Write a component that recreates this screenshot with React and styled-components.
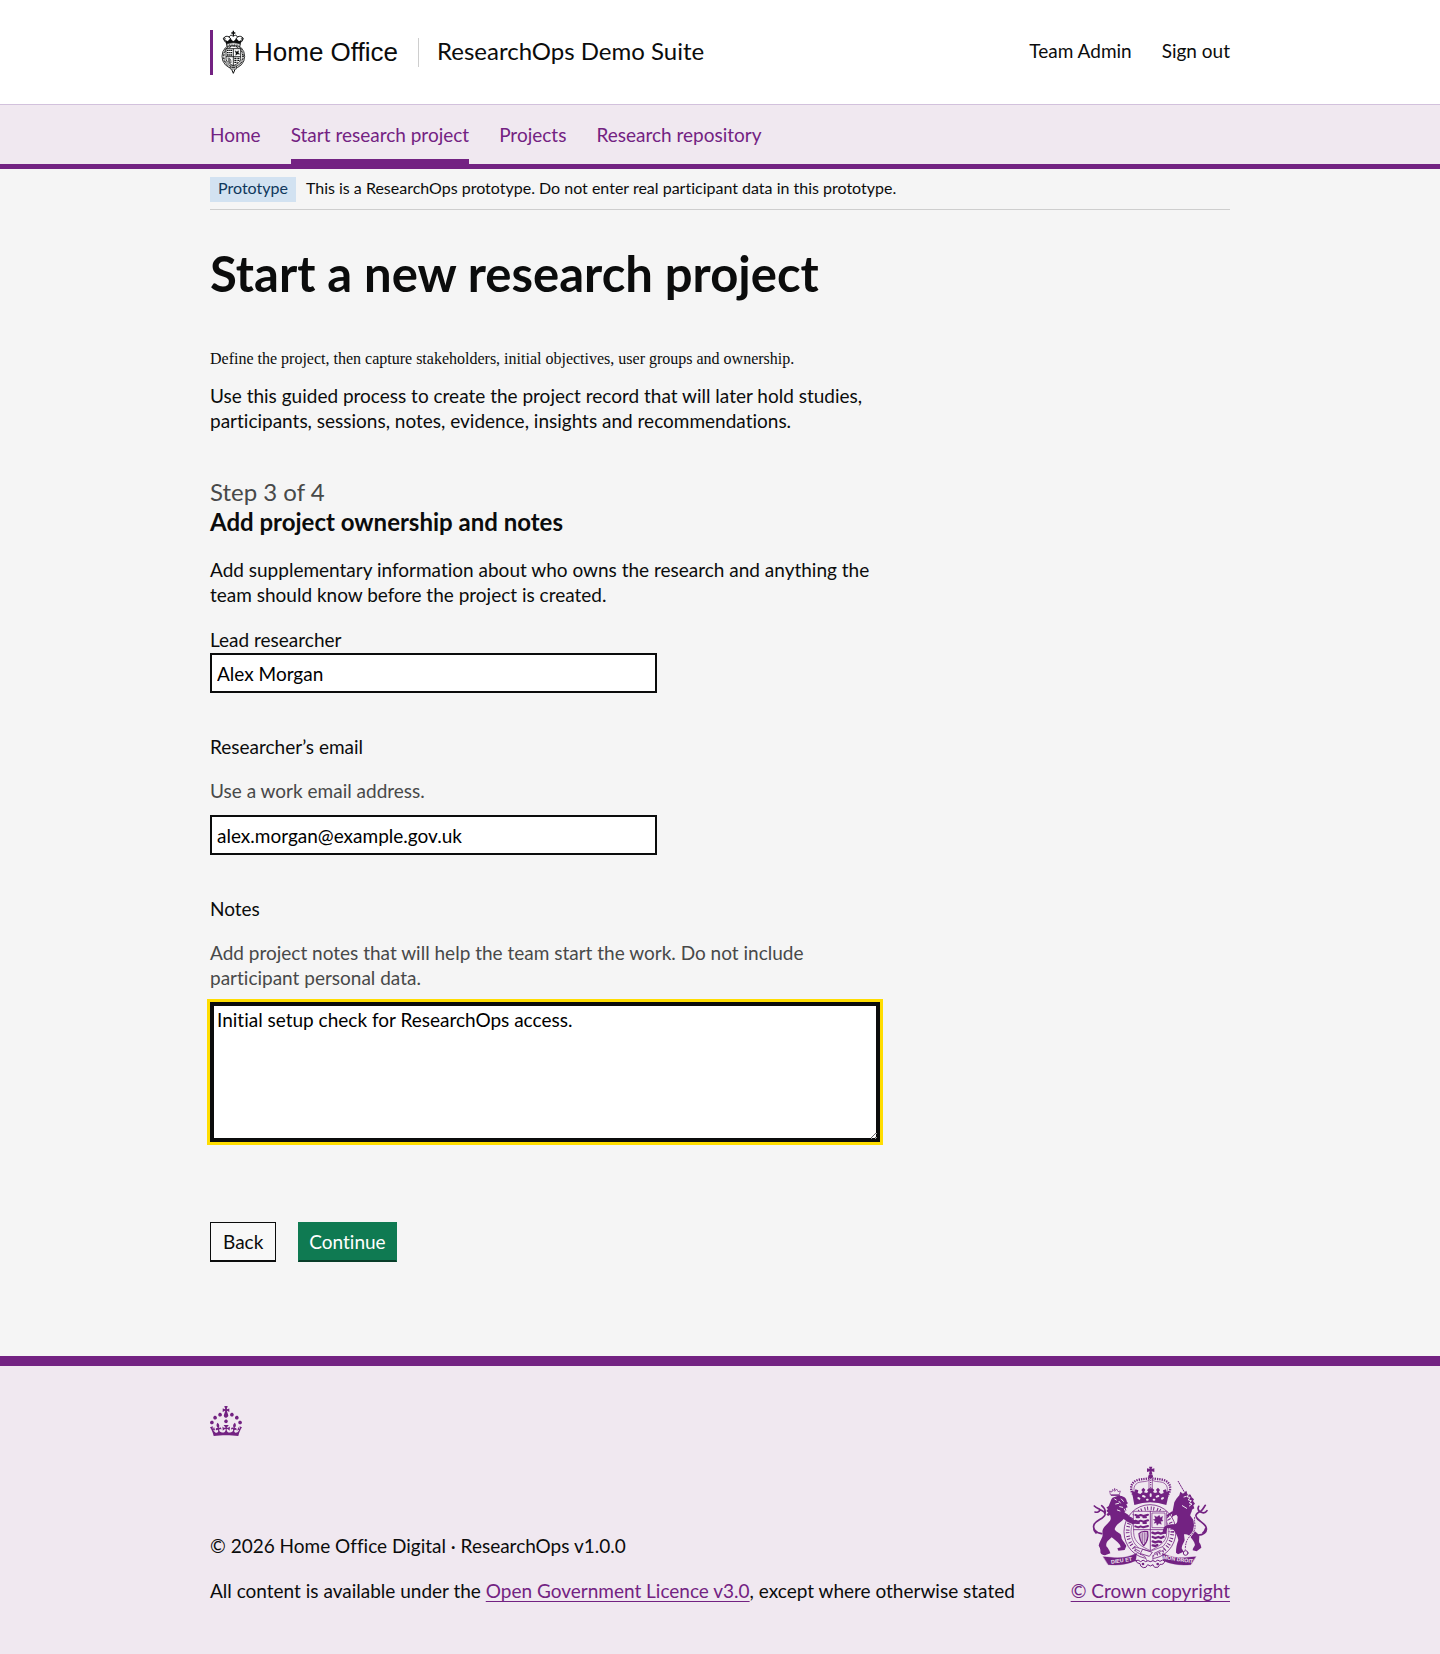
import React from 'react';
import styled, { createGlobalStyle, css } from 'styled-components';

const purple = '#732282';
const tint = '#f0e8f0';
const ink = '#0b0c0c';
const muted = '#484949';

const GlobalStyle = createGlobalStyle`
  *, *::before, *::after { box-sizing: border-box; }
  body {
    margin: 0;
    background: ${tint};
    color: ${ink};
    font: 19px/25px Lato, "Liberation Sans", sans-serif;
    font-variant-ligatures: none;
  }
  p, h1, h2 { margin: 0; }
`;

const Page = styled.div`
  background: #f5f5f5;
`;

const Container = styled.div`
  max-width: 1020px;
  margin: 0 auto;
  @media (max-width: 1080px) { margin: 0 30px; }
`;

const Header = styled.header`
  background: #fff;
  border-bottom: 1px solid #d2c1dc;
`;

const HeaderRow = styled(Container)`
  display: flex;
  align-items: center;
  flex-wrap: wrap;
  min-height: 104px;
`;

const Brand = styled.a`
  display: flex;
  align-items: center;
  gap: 8px;
  height: 45px;
  padding-left: 8px;
  border-left: 3px solid ${purple};
  color: ${ink};
  font: 26px/45px "Liberation Sans", Arial, sans-serif;
  text-decoration: none;
`;

const ServiceName = styled.a`
  margin-left: 20px;
  padding: 0 0 3px 18px;
  border-left: 1px solid #cecece;
  color: ${ink};
  font-size: 24px;
  line-height: 26px;
  text-decoration: none;
`;

const Account = styled.nav`
  display: flex;
  gap: 30px;
  margin-left: auto;
  padding-bottom: 3px;
`;

const AccountLink = styled.a`
  color: ${ink};
  text-decoration: none;
`;

const ServiceNav = styled.nav`
  background: ${tint};
  border-bottom: 5px solid ${purple};
`;

const NavList = styled(Container).attrs({ as: 'ul' })`
  display: flex;
  flex-wrap: wrap;
  gap: 0 30px;
  padding: 0;
  list-style: none;
`;

const NavLink = styled.a`
  display: block;
  padding: 17px 0 12px;
  border-bottom: 5px solid ${p => (p.$current ? purple : 'transparent')};
  color: ${purple};
  text-decoration: none;
`;

const PhaseBanner = styled.div`
  display: flex;
  align-items: flex-start;
  gap: 10px;
  padding: 8px 0 7px;
  border-bottom: 1px solid #cecece;
  font-size: 16px;
  line-height: 22px;
`;

const Tag = styled.strong`
  padding: 0 8px 3px;
  background: #d2e2f1;
  color: #0f385c;
  font-weight: 400;
`;

const Main = styled.main`
  padding: 34px 0 94px;
`;

const Column = styled.div`
  max-width: 670px;
`;

const Title = styled.h1`
  font-size: 49px;
  line-height: 58px;
  font-weight: 700;
`;

const Summary = styled.p`
  margin-top: 48px;
  font: 16px/18px "Liberation Serif", "Times New Roman", serif;
`;

const Body = styled.p`
  margin-top: ${p => p.$gap}px;
`;

const StepCaption = styled.span`
  display: block;
  margin-top: 44px;
  color: ${muted};
  font-size: 24px;
  line-height: 30px;
`;

const StepTitle = styled.h2`
  font-size: 24px;
  line-height: 30px;
  font-weight: 700;
`;

const Form = styled.form`
  display: flex;
  flex-direction: column;
  gap: 40px;
  margin-top: 19px;
`;

const Field = styled.div`
  display: flex;
  flex-direction: column;
`;

const Label = styled.label`
  padding: 1px 0;
`;

const Hint = styled.div`
  max-width: 620px;
  margin: 18px 0 12px;
  color: ${muted};
`;

const control = css`
  width: 100%;
  border: 2px solid ${ink};
  border-radius: 0;
  background: #fff;
  color: #000;
  font: inherit;
`;

const TextInput = styled.input`
  ${control}
  max-width: 447px;
  height: 40px;
  padding: 5px;
`;

const TextArea = styled.textarea`
  ${control}
  display: block;
  height: 140px;
  padding: 3px 5px;
  resize: vertical;
  box-shadow: inset 0 0 0 2px ${ink};
  outline: 3px solid #ffdd00;
`;

const Actions = styled.div`
  display: flex;
  gap: 22px;
  margin-top: 40px;
`;

const Button = styled.button`
  height: 40px;
  padding: 0 ${p => (p.$primary ? 10 : 12)}px;
  border: 1px solid ${p => (p.$primary ? '#0f7a52' : ink)};
  border-bottom: 2px solid ${p => (p.$primary ? '#083d29' : ink)};
  border-radius: 0;
  background: ${p => (p.$primary ? '#0f7a52' : '#f8f8f8')};
  color: ${p => (p.$primary ? '#fff' : ink)};
  font: inherit;
`;

const Footer = styled.footer`
  padding: 40px 0 50px;
  border-top: 10px solid ${purple};
  background: ${tint};
  color: ${ink};
`;

const FooterRow = styled.div`
  display: flex;
  flex-wrap: wrap;
  align-items: flex-end;
  justify-content: space-between;
  gap: 30px;
  margin-top: 30px;
`;

const FooterMeta = styled.div`
  display: flex;
  flex-direction: column;
  gap: 20px;
`;

const FooterLink = styled.a`
  color: ${purple};
  text-decoration: underline;
  text-decoration-thickness: 1px;
  text-underline-offset: 3px;
`;

const Copyright = styled(FooterLink)`
  display: flex;
  flex-direction: column;
  align-items: center;
  gap: 9px;
`;

const Block = styled.svg`
  display: block;
  flex: none;
`;

const ArmsText = styled.text`
  font: 700 16px "Liberation Sans", sans-serif;
`;

function Crest() {
  return (
    <Block width="25" height="44" viewBox="62 43 75 132" fill="none" stroke="#0b0c0c" strokeWidth="2" aria-hidden="true">
      <path d="M97 45h4v5h4v4h-4v8h-4v-8h-4v-4h4z" fill="#0b0c0c" stroke="none" />
      <path d="M98 62c-4-5-10-4-11 3M100 62c4-5 10-4 11 3M76 80c-10-10-5-19 5-18 8 1 11 7 11 15M122 80c10-10 5-19-5-18-8 1-11 7-11 15" strokeWidth="3" />
      <circle cx="72" cy="69" r="3" /><circle cx="126" cy="69" r="3" />
      <path d="M74 72l8 5 7-8 10 8 10-8 7 8 8-5-4 17H78z" fill="#0b0c0c" stroke="none" />
      <ellipse cx="99" cy="122" rx="34" ry="36" fill="#fff" strokeWidth="2.5" />
      <ellipse cx="99" cy="122" rx="29" ry="31" strokeWidth="5" strokeDasharray="2.5 2" />
      <path d="M79 84q20-5 40 0v8q-20-5-40 0z" fill="#fff" />
      <path d="M81 88h36" strokeDasharray="3 2" strokeWidth="3" />
      <path d="M77 99h44v29c0 13-12 17-22 22-10-5-22-9-22-22z" fill="#fff" strokeWidth="2.5" />
      <path d="M99 99v51M77 123h44" strokeWidth="2.5" />
      <path d="M80 104h16M80 111h16M80 118h16M102 128h16M102 134h15M102 140h11" strokeWidth="4" strokeDasharray="5 1.5 3 1" />
      <path d="M104 105l5 3 6-3-1 6 4 5-6-1-6 4 1-6z" fill="#0b0c0c" strokeWidth="1" />
      <path d="M82 128c8-2 10 4 10 14M84 129v9l8 5M88 129v11" strokeWidth="2" />
      <path d="M90 151h18v9H90z" fill="#fff" />
      <path d="M93 155h12M94 161l5 12 5-12" strokeWidth="3" />
    </Block>
  );
}

function Crown() {
  return (
    <Block width="32" height="30" viewBox="0 0 32 30" fill={purple} aria-hidden="true">
      <path d="M22.6 10.4c-1 .4-2-.1-2.4-1-.4-.9.1-2 1-2.4.9-.4 2 .1 2.4 1s-.1 2-1 2.4m-5.9 6.7c-.9.4-2-.1-2.4-1-.4-.9.1-2 1-2.4.9-.4 2 .1 2.4 1s-.1 2-1 2.4m10.8-3.7c-1 .4-2-.1-2.4-1-.4-.9.1-2 1-2.4.9-.4 2 .1 2.4 1s0 2-1 2.4m3.3 4.8c-1 .4-2-.1-2.4-1-.4-.9.1-2 1-2.4.9-.4 2 .1 2.4 1s-.1 2-1 2.4M17 4.7l2.3 1.2V2.5l-2.3.7-.2-.2.9-3h-3.4l.9 3-.2.2c-.1.1-2.3-.7-2.3-.7v3.4L15 4.7c.1.1.1.2.2.2l-1.3 4c-.1.2-.1.4-.1.6 0 1.1.8 2 1.9 2.2h.7c1-.2 1.9-1.1 1.9-2.1 0-.2 0-.4-.1-.6l-1.3-4c-.1-.2 0-.2.1-.3m-7.6 5.7c.9.4 2-.1 2.4-1 .4-.9-.1-2-1-2.4-.9-.4-2 .1-2.4 1s0 2 1 2.4m-5 3c.9.4 2-.1 2.4-1 .4-.9-.1-2-1-2.4-.9-.4-2 .1-2.4 1s.1 2 1 2.4m-3.2 4.8c.9.4 2-.1 2.4-1 .4-.9-.1-2-1-2.4-.9-.4-2 .1-2.4 1s0 2 1 2.4m14.8 11c4.4 0 8.6.3 12.3.8 1.1-4.5 2.4-7 3.7-8.8l-2.5-.9c.2 1.3.3 1.9 0 2.7-.4-.4-.8-1.1-1.1-2.3l-1.2 4c.7-.5 1.3-.8 2-.9-1.1 2.5-2.6 3.1-3.5 3-1.1-.2-1.7-1.2-1.5-2.1.3-1.2 1.5-1.5 2.1-.1 1.1-2.3-.8-3-2-2.3 1.9-1.9 2.1-3.5.6-5.6-2.1 1.6-2.1 3.2-1.2 5.5-1.2-1.4-3.2-.6-2.5 1.6.9-1.4 2.1-.5 1.9.8-.2 1.1-1.7 2.1-3.5 1.9-2.7-.2-2.9-2.1-2.9-3.6.7-.1 1.9.5 2.9 1.9l.4-4.3c-1.1 1.1-2.1 1.4-3.2 1.4.4-1.2 2.1-3 2.1-3h-5.4s1.7 1.9 2.1 3c-1.1 0-2.1-.2-3.2-1.4l.4 4.3c1-1.4 2.2-2 2.9-1.9-.1 1.5-.2 3.4-2.9 3.6-1.9.2-3.4-.8-3.5-1.9-.2-1.3 1-2.2 1.9-.8.7-2.3-1.2-3-2.5-1.6.9-2.2.9-3.9-1.2-5.5-1.5 2-1.3 3.7.6 5.6-1.2-.7-3.1 0-2 2.3.6-1.4 1.8-1.1 2.1.1.2.9-.3 1.9-1.5 2.1-.9.2-2.4-.5-3.5-3 .6 0 1.2.3 2 .9l-1.2-4c-.3 1.1-.7 1.9-1.1 2.3-.3-.8-.2-1.4 0-2.7l-2.9.9C1.3 23 2.6 25.5 3.7 30c3.7-.5 7.9-.8 12.3-.8" />
    </Block>
  );
}

function RoyalArms() {
  return (
    <Block width="117" height="103" viewBox="105 49 351 309" fill="none" stroke={purple} strokeWidth="3" strokeLinecap="round" strokeLinejoin="round" aria-hidden="true">
      {/* Garter */}
      <ellipse cx="279" cy="246" rx="78" ry="81" fill={tint} strokeWidth="2.5" />
      <ellipse cx="279" cy="246" rx="57" ry="61" strokeWidth="2" />
      <ellipse cx="279" cy="246" rx="67" ry="70" strokeWidth="11" strokeDasharray="3 5 3 8" strokeLinecap="butt" />
      {/* Shield */}
      <path d="M230 185h99v65c0 30-28 42-49 53-22-11-50-23-50-53z" fill={tint} strokeWidth="2" />
      <path d="M280 185v116M230 240h99" strokeWidth="2.5" />
      <path d="M235 196l9 3 7-3 8 3 14-4M239 203h7M259 203h8M235 213l9 3 7-3 8 3 14-4M239 220h7M259 220h8M235 230l9 3 7-3 8 3 14-4" strokeWidth="6" />
      <path d="M286 190h38v44h-38z" strokeWidth="2" />
      <path d="M293 199l7 3 7-5 3 7 7-4-2 9 3 5-7 1 2 9-7-3-6 6-2-8-7 2 4-7-6-4 6-2z" fill={purple} strokeWidth="1" />
      <path d="M246 252c6-8 15-8 26-6 2 14 0 30-12 42-8-10-13-19-14-36z" strokeWidth="4" />
      <path d="M252 252v20M257 250v29M262 249v32M267 250v22" strokeWidth="2" />
      <path d="M286 249l8 3 9-3 8 3 13-4M287 262l8 3 9-3 8 3 8-4M287 275l8 3 9-3 8 2M287 287l8 2 6-3" strokeWidth="7" />
      {/* Belt */}
      <path d="M235 292l44 13 38-14 5 9-35 18 1 17-16 3-8-17-28-16z" fill={tint} strokeWidth="2" />
      <path d="M258 299l28 9-9 12-26-8zM238 300l10 5M292 311l18-9" strokeWidth="2.5" />
      {/* Crown */}
      <path d="M276 51h10l-2 7 8-2v11l-8-2 2 8h-10l2-8-8 2V56l8 2z" fill={purple} stroke="none" />
      <circle cx="281" cy="80" r="7" fill={purple} stroke="none" />
      <path d="M232 140c-18-24-8-44 10-49 14-4 28-2 39-7 11 5 25 3 39 7 18 5 28 25 10 49" strokeWidth="7" strokeLinecap="butt" strokeDasharray="4 3" />
      <path d="M238 138c-14-18-6-36 8-40 12-3 24-1 31-7M324 138c14-18 6-36-8-40-12-3-24-1-31-7" strokeWidth="2" />
      <path d="M276 90v30M286 90v30" strokeWidth="2" />
      <path d="M281 90v30" strokeWidth="4" strokeDasharray="3 4" strokeLinecap="butt" />
      <path d="M224 122l9 5 2-8 9 3-2 8 8 3 7-6-4-6 6-7 6 6-4 8 7 2 6-3-4-6 6-5h10l6 5-4 6 6 3 7-2-4-8 6-6 6 7-4 6 7 6 8-3-2-8 9-3 2 8 9-5-10 44q-48-16-96 0z" fill={purple} stroke="none" />
      <path d="M244 145l3 2M258 139l5 2M281 134v5M304 139l-5 2M318 145l-3 2M270 150h2M290 150h2" stroke={tint} strokeWidth="6" />
      {/* Lion and unicorn */}
      <g fill={purple} stroke="none">
        <path d="M162 152c1-7 7-10 13-11 8-3 17-4 24 0 7 3 10 8 10 14l4 6-5 3 4 9-6 2 2 8-6 4c4 5 10 6 14 11 7 5 7 9 14 12l10 4-2 8-12 1-14-6-12-9c-5 6-12 10-18 16-5 5-8 10-9 15 4 8 12 10 17 14 3 4 3 8 4 14 5 9 11 14 14 22l-5 12-19 2-3-7 10-3c-1-7-4-10-9-15-7-6-13-12-18-15l-12 11c-4 5-5 11-4 16 6 7 9 11 12 21l-16 6c-6-1-13-3-14-9 1-6-1-15-5-20 2-10 7-18 11-27 2-6-1-13 1-20 4-11 15-19 22-28 4-6 2-12 0-17l-6 3-5-5 6-5-6-5 5-6-5-4 7-5z" />
        <path d="M352 158c4-8 9-15 15-21l3-11 8 6 10-9 3 10 10 2 3 8 7 6-3 5 6 8-5 5 3 9-7 4c0 7-6 12-5 18 6 8 12 14 12 23 0 8-4 14-1 21 5 7 14 10 16 18 0 8-2 13 0 19 4 4 5 9 6 15l-14 11-12-3c0-7 5-11 7-16-1-10-10-18-15-26-6-5-11-6-18-6l2 18c-4 10-8 14-9 24l6 10-17 8-6-5c0-14 2-25 7-38-2-11-7-20-14-30-6-5-13-6-20-5l-3 17-10-3c0-8 2-15 7-20 8-5 18-6 28-6 6-1 9-6 9-11l1-12-4-6-9 4-6 6z" />
      </g>
      <path d="M160 134l-2-10 7 3 2-8 6 6 6-7 4 8 7-2-3 10z" strokeWidth="2" />
      <path d="M173 121v-4M163 137h25" strokeWidth="3" />
      <path d="M173 148l5 3M176 163l9-2M193 148l6 7M188 171l9 2M181 181l8 3M202 178l3 6M186 155l4 5" stroke={tint} strokeWidth="3" />
      <path d="M134 252c-18-2-29-16-22-29 7-12 28-16 32-28 2-10-9-11-15-15-5-4-9-3-17-11M129 180c-2 7-9 9-15 7M144 192c2-9-2-18-10-24M111 236c-2 6 2 10 6 14" strokeWidth="5" />
      <path d="M363 94l19 33" strokeWidth="3" strokeDasharray="5 1" strokeLinecap="butt" />
      <path d="M381 142l7-2M394 134l-3 8 8 1-5 8 9 2-6 7 8 3-8 6M376 168l13 8" stroke={tint} strokeWidth="3" />
      <path d="M416 256c24 3 36-10 31-24-6-14-25-18-30-31-3-9 9-14 15-17 6-4 9-12 13-17M430 187c-7-4-8-11-5-17M446 236c-2 6-3 10-8 13M433 188c7 3 14 0 17-5" strokeWidth="5" />
      <path d="M332 198l14-10" strokeWidth="6" />
      <path d="M413 203c-2 20 6 31-4 44-10 15-24 20-24 52" stroke={tint} strokeWidth="6" />
      <path d="M413 203c-2 20 6 31-4 44-10 15-24 20-24 52" strokeWidth="3" strokeDasharray="3 5" />
      <circle cx="386" cy="310" r="7" strokeWidth="3" />
      {/* Motto scroll */}
      <path d="M139 321l22 2q42 6 78-12l-3 22q-38 17-82 12zM416 321l-22 2q-42 6-78-12l3 22q38 17 82 12z" fill={purple} strokeWidth="1" />
      <path d="M236 333q8-5 15 3 7-9 15 0 7-6 14 0 8-6 15 0 8-9 14-1 8-7 14-1-2 12-14 10-5 13-15 9-5-2-6-8-8 8-16 0-4 11-13 9-10-3-10-12-9 0-13-9z" fill={tint} strokeWidth="3" />
      <circle cx="258" cy="343" r="4" fill={purple} stroke="none" /><circle cx="302" cy="343" r="4" fill={purple} stroke="none" />
      <ArmsText x="163" y="342" transform="rotate(-8 163 342)" fill={tint} stroke="none">DIEU ET</ArmsText>
      <ArmsText x="317" y="328" transform="rotate(8 317 328)" fill={tint} stroke="none">MON DROIT</ArmsText>
    </Block>
  );
}

const navItems = [
  { label: 'Home' },
  { label: 'Start research project', current: true },
  { label: 'Projects' },
  { label: 'Research repository' },
];

export default function App() {
  return (
    <Page>
      <GlobalStyle />
      <Header>
        <HeaderRow>
          <Brand href="#home-office"><Crest />Home Office</Brand>
          <ServiceName href="#service">ResearchOps Demo Suite</ServiceName>
          <Account aria-label="Account">
            <AccountLink href="#team">Team Admin</AccountLink>
            <AccountLink href="#sign-out">Sign out</AccountLink>
          </Account>
        </HeaderRow>
      </Header>
      <ServiceNav aria-label="Service">
        <NavList>
          {navItems.map(item => (
            <li key={item.label}>
              <NavLink href="#" $current={item.current} aria-current={item.current ? 'page' : undefined}>{item.label}</NavLink>
            </li>
          ))}
        </NavList>
      </ServiceNav>
      <Container>
        <PhaseBanner>
          <Tag>Prototype</Tag>
          <span>This is a ResearchOps prototype. Do not enter real participant data in this prototype.</span>
        </PhaseBanner>
        <Main>
          <Column>
            <Title>Start a new research project</Title>
            <Summary>Define the project, then capture stakeholders, initial objectives, user groups and ownership.</Summary>
            <Body $gap={15}>Use this guided process to create the project record that will later hold studies, participants, sessions, notes, evidence, insights and recommendations.</Body>
            <StepCaption>Step 3 of 4</StepCaption>
            <StepTitle>Add project ownership and notes</StepTitle>
            <Body $gap={20}>Add supplementary information about who owns the research and anything the team should know before the project is created.</Body>
            <Form>
              <Field>
                <Label htmlFor="lead">Lead researcher</Label>
                <TextInput id="lead" type="text" defaultValue="Alex Morgan" />
              </Field>
              <Field>
                <Label htmlFor="email">Researcher’s email</Label>
                <Hint id="email-hint">Use a work email address.</Hint>
                <TextInput id="email" type="email" aria-describedby="email-hint" defaultValue="alex.morgan@example.gov.uk" />
              </Field>
              <Field>
                <Label htmlFor="notes">Notes</Label>
                <Hint id="notes-hint">Add project notes that will help the team start the work. Do not include participant personal data.</Hint>
                <TextArea id="notes" aria-describedby="notes-hint" spellCheck={false} defaultValue="Initial setup check for ResearchOps access." />
              </Field>
              <Actions>
                <Button type="button">Back</Button>
                <Button type="submit" $primary>Continue</Button>
              </Actions>
            </Form>
          </Column>
        </Main>
      </Container>
      <Footer>
        <Container>
          <Crown />
          <FooterRow>
            <FooterMeta>
              <p>© 2026 Home Office Digital · ResearchOps v1.0.0</p>
              <p>All content is available under the <FooterLink href="#licence">Open Government Licence v3.0</FooterLink>, except where otherwise stated</p>
            </FooterMeta>
            <Copyright href="#copyright"><RoyalArms />© Crown copyright</Copyright>
          </FooterRow>
        </Container>
      </Footer>
    </Page>
  );
}
